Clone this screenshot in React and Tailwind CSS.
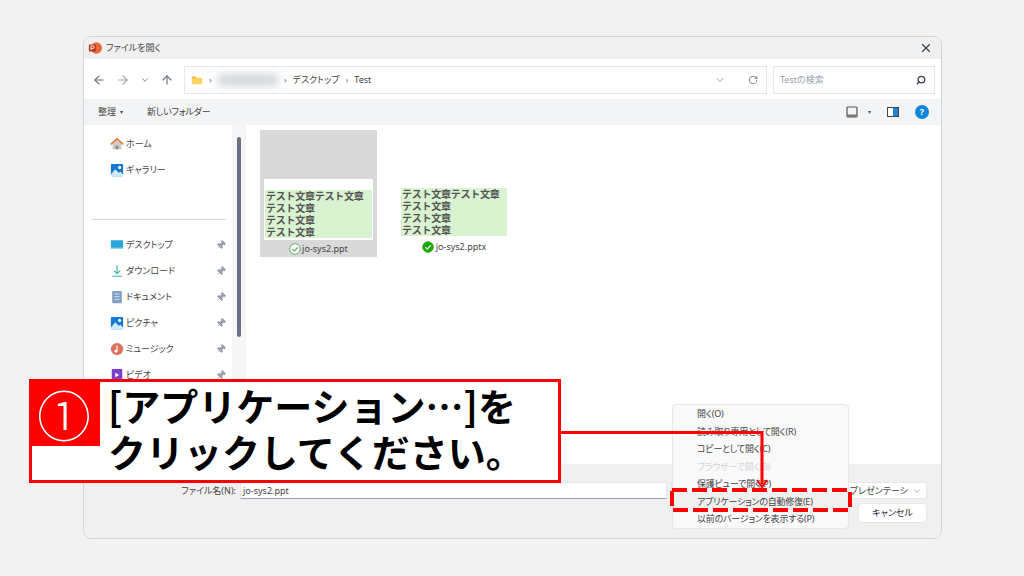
import { ArrowLeft, ArrowRight, ArrowUp, ChevronDown, Pin, RotateCw, Search, X } from "lucide-react";

const sidebarTop = [
  { label: "ホーム", icon: <HomeIcon /> },
  { label: "ギャラリー", icon: <PictureIcon /> },
];

const sidebarPinned = [
  { label: "デスクトップ", icon: <DesktopIcon /> },
  { label: "ダウンロード", icon: <DownloadIcon /> },
  { label: "ドキュメント", icon: <DocumentIcon /> },
  { label: "ピクチャ", icon: <PictureIcon /> },
  { label: "ミュージック", icon: <MusicIcon /> },
  { label: "ビデオ", icon: <VideoIcon /> },
];

const menuItems = [
  { label: "開く(O)" },
  { label: "読み取り専用として開く(R)" },
  { label: "コピーとして開く(C)" },
  { label: "ブラウザーで開く(B)", disabled: true },
  { label: "保護ビューで開く(P)" },
  { label: "アプリケーションの自動修復(E)", active: true },
  { label: "以前のバージョンを表示する(P)" },
];

function HomeIcon() {
  return (
    <svg viewBox="0 0 16 16" className="w-3.5 h-3.5">
      <path d="M3 8v6h10V8L8 3z" fill="#c9c9c9" />
      <path d="M6.5 14v-4h3v4z" fill="#8a8a8a" />
      <path d="M1 8.5 8 2l7 6.500" fill="none" stroke="#e2762b" strokeWidth="1.800" />
    </svg>
  );
}

function PictureIcon() {
  return (
    <svg viewBox="0 0 16 16" className="w-3.5 h-3.5">
      <rect x="1" y="1" width="14" height="14" rx="1" fill="#1478d4" />
      <circle cx="11" cy="5" r="1.800" fill="#fff" />
      <path d="M1 13 6 7l4 4 2-1 3 3v2H1z" fill="#cfe8fb" />
    </svg>
  );
}

function DesktopIcon() {
  return (
    <svg viewBox="0 0 16 16" className="w-3.5 h-3.5">
      <rect x="1" y="2.500" width="14" height="10" rx="0.500" fill="#2aa6d8" />
      <rect x="1" y="11" width="14" height="1.500" fill="#9fd8ee" />
    </svg>
  );
}

function DownloadIcon() {
  return (
    <svg viewBox="0 0 16 16" className="w-3.5 h-3.5" fill="none" stroke="#3fb5a3" strokeWidth="1.300">
      <path d="M8 1.500v9M4.500 7.500 8 11l3.500-3.500M2.500 14h11" />
    </svg>
  );
}

function DocumentIcon() {
  return (
    <svg viewBox="0 0 16 16" className="w-3.5 h-3.5">
      <rect x="2.500" y="1" width="11" height="14" rx="1" fill="#7f9fc4" />
      <path d="M5 4.500h6M5 7.500h6M5 10.500h6" stroke="#dbe6f2" strokeWidth="1" />
    </svg>
  );
}

function MusicIcon() {
  return (
    <svg viewBox="0 0 16 16" className="w-3.5 h-3.5">
      <circle cx="8" cy="8" r="7" fill="#e0705c" />
      <path d="M8 4v6" stroke="#fff" strokeWidth="1.300" />
      <circle cx="6.800" cy="10.500" r="1.700" fill="#fff" />
    </svg>
  );
}

function VideoIcon() {
  return (
    <svg viewBox="0 0 16 16" className="w-3.5 h-3.5">
      <rect x="2" y="1" width="12" height="14" rx="1" fill="#7c3fd1" />
      <path d="M6 5.500v5l4.500-2.500z" fill="#fff" />
    </svg>
  );
}

function PowerPointIcon() {
  return (
    <svg viewBox="0 0 16 16" className="w-3.5 h-3.5">
      <circle cx="9.500" cy="8" r="6.500" fill="#e8663c" />
      <rect x="1" y="4" width="8" height="8" rx="1" fill="#b83c1e" />
      <path d="M3.500 10.500v-5h2a1.500 1.500 0 0 1 0 3h-2" fill="none" stroke="#fff" strokeWidth="1" />
    </svg>
  );
}

function SyncCheck({ filled }) {
  return (
    <svg viewBox="0 0 12 12" className="w-3 h-3 shrink-0">
      <circle cx="6" cy="6" r="5.300" fill={filled ? "#22a80f" : "#fff"} stroke={filled ? "#22a80f" : "#4fa65a"} strokeWidth="0.900" />
      <path d="M3.300 6.200 5.300 8l3.400-3.700" fill="none" stroke={filled ? "#fff" : "#4fa65a"} strokeWidth="1.100" />
    </svg>
  );
}

function SlideText() {
  return (
    <div className="bg-[#d9f2d0] h-12 w-full pl-px text-[10px] leading-3 font-bold text-[#555] tracking-tight [font-feature-settings:normal]">
      <p>テスト文章テスト文章</p>
      <p>テスト文章</p>
      <p>テスト文章</p>
      <p>テスト文章</p>
    </div>
  );
}

function SidebarRow({ item, pinned }) {
  return (
    <div className="flex items-center h-6.5 pl-6.5 pr-1.5 gap-0.5">
      {item.icon}
      <span className="flex-1">{item.label}</span>
      {pinned && <Pin className="w-2.5 h-2.5 text-gray-400 fill-gray-400 rotate-45" />}
    </div>
  );
}

function FileDialog() {
  return (
    <div className="w-[859px] h-[503px] flex flex-col bg-white border border-gray-300 rounded-lg overflow-hidden text-[9px] text-[#444] [font-feature-settings:'palt']">
      {/* Title bar */}
      <div className="h-5.5 shrink-0 flex items-center pl-1 pr-2 gap-1 bg-[#f0f0f0]">
        <PowerPointIcon />
        <span>ファイルを開く</span>
        <X className="w-3.5 h-3.5 ml-auto text-gray-700" />
      </div>

      {/* Address row */}
      <div className="h-10 shrink-0 flex items-center pt-0.5 pl-2 pr-1.5 gap-1.5">
        <div className="flex items-center gap-2.5 w-21.5 text-gray-500 shrink-0">
          <ArrowLeft className="w-3.5 h-3.5" />
          <ArrowRight className="w-3.5 h-3.5 text-gray-400" />
          <ChevronDown className="w-2.5 h-2.5" />
          <ArrowUp className="w-3.5 h-3.5" />
        </div>
        <div className="flex-1 h-7 flex items-center pl-1.5 pr-2 gap-1.5 border border-gray-200">
          <svg viewBox="0 0 16 14" className="w-3 h-3">
            <path d="M1 2.500h5l1.500 1.500H15v8.500H1z" fill="#fcd462" />
            <path d="M1 2.500h5l1.500 1.500H1z" fill="#e8a92e" />
          </svg>
          <span className="text-gray-500">›</span>
          <div className="w-15 h-3 bg-gray-300 blur-xs" />
          <span className="text-gray-500">›</span>
          <span>デスクトップ</span>
          <span className="text-gray-500">›</span>
          <span>Test</span>
          <ChevronDown className="w-3 h-3 ml-auto text-gray-400" />
          <RotateCw className="w-2.5 h-2.5 ml-4 text-gray-500" />
        </div>
        <div className="w-[162px] h-7 flex items-center justify-between pl-1.5 pr-2 border border-gray-200 text-gray-400">
          <span>Testの検索</span>
          <Search className="w-2.5 h-2.5 text-gray-700 -scale-x-100" strokeWidth={3} />
        </div>
      </div>

      {/* Toolbar */}
      <div className="h-6.5 shrink-0 flex items-center pl-3.5 pr-3 bg-[#f3f4f6]">
        <span>整理</span>
        <span className="ml-1 text-[6px]">▾</span>
        <span className="ml-6 tracking-tight">新しいフォルダー</span>
        <div className="ml-auto flex items-center gap-2.5">
          <svg viewBox="0 0 12 12" className="w-3 h-3">
            <rect x="1" y="1" width="10" height="10" rx="1" fill="none" stroke="#555" strokeWidth="1.200" />
            <rect x="1" y="8.500" width="10" height="2.500" fill="#777" />
          </svg>
          <span className="text-[6px] text-gray-600">▾</span>
          <svg viewBox="0 0 12 12" className="w-3 h-3 ml-1.5">
            <rect x="0.500" y="1.500" width="11" height="9" fill="#fff" stroke="#444" />
            <rect x="6" y="2" width="5" height="8" fill="#1a86d8" />
          </svg>
          <div className="ml-1.5 w-3.5 h-3.5 rounded-full bg-[#0f86dc] text-white flex items-center justify-center font-bold">?</div>
        </div>
      </div>

      {/* Navigation pane and files */}
      <div className="flex-1 min-h-0 flex">
        <div className="w-37 shrink-0 pt-1.5">
          {sidebarTop.map((item) => (
            <SidebarRow key={item.label} item={item} />
          ))}
          <div className="mt-9 mb-3 ml-2 mr-1.5 border-t border-gray-300" />
          {sidebarPinned.map((item) => (
            <SidebarRow key={item.label} item={item} pinned />
          ))}
        </div>
        <div className="w-3.5 shrink-0 bg-[#f6f6f6] pt-3 flex justify-center">
          <div className="w-1 h-50 rounded-full bg-gray-500" />
        </div>
        <div className="flex-1 flex items-start gap-6 pl-3.5 pt-[5px]">
          <div className="w-[117px] h-[127px] flex flex-col items-center justify-end bg-[#d9d9d9]">
            <div className="w-[109px] h-[61px] flex flex-col justify-end pb-0.5 px-px bg-white">
              <SlideText />
            </div>
            <div className="h-[17px] flex items-center gap-px">
              <SyncCheck />
              <span>jo-sys2.ppt</span>
            </div>
          </div>
          <div className="w-[106px] pt-[58px] flex flex-col items-center">
            <SlideText />
            <div className="h-[22px] flex items-center gap-0.5">
              <SyncCheck filled />
              <span>jo-sys2.pptx</span>
            </div>
          </div>
        </div>
      </div>

      {/* File name row and buttons */}
      <div className="h-[74px] shrink-0 bg-[#f0f0f0] pt-[18px] pr-3.5 flex flex-col gap-1">
        <div className="flex items-center h-[17px]">
          <span className="w-[152px] text-right">ファイル名(N):</span>
          <div className="flex-1 h-full flex items-center ml-1 pl-0.5 bg-white border border-gray-200 border-b-gray-400">
            jo-sys2.ppt
          </div>
          <div className="w-64 h-full ml-1 flex items-center justify-end gap-1 pr-1 bg-white border border-gray-200 whitespace-nowrap">
            <span>Microsoft PowerPoint プレゼンテーシ</span>
            <ChevronDown className="w-2.5 h-2.5 text-gray-400" />
          </div>
        </div>
        <div className="flex justify-end gap-2">
          <div className="w-[69px] h-5 flex items-center justify-center bg-white border border-gray-200 rounded-sm text-gray-800">
            キャンセル
          </div>
        </div>
      </div>
    </div>
  );
}

function OpenMenu() {
  return (
    <div className="absolute left-[672px] top-[404px] w-[177px] bg-[#f9f9f9] border border-gray-200 rounded-sm text-[9px] text-[#444] tracking-tight [font-feature-settings:'palt']">
      {menuItems.map((item) => (
        <div
          key={item.label}
          className={`h-[17.500px] flex items-center pl-6 ${item.disabled ? "text-gray-300" : ""} ${item.active ? "bg-[#f0f0f0]" : ""}`}
        >
          {item.label}
        </div>
      ))}
    </div>
  );
}

function Callout() {
  return (
    <div className="absolute left-[29px] top-[379px] w-[532px] h-[104px] flex bg-white/95 border-3 border-[#ff0000] font-['Noto_Sans_CJK_JP',sans-serif]">
      <div className="w-[68px] h-[64px] shrink-0 flex items-center justify-center pr-1 bg-[#ff0000] text-white text-[54px] leading-none font-light">①</div>
      <div className="pl-2 text-[38px] leading-[46px] font-semibold text-black whitespace-nowrap">
        <p>[アプリケーション…]を</p>
        <p>クリックしてください。</p>
      </div>
    </div>
  );
}

function Annotations() {
  return (
    <svg className="absolute inset-0 w-full h-full pointer-events-none" viewBox="0 0 1024 576">
      <path d="M561 432.500H762V484" fill="none" stroke="#ff0000" strokeWidth="3" />
      <path d="M757 480l5 7 5-7" fill="none" stroke="#ff0000" strokeWidth="2" />
      <rect x="672" y="490" width="178" height="20" fill="none" stroke="#ff0000" strokeWidth="4" strokeDasharray="15 5" />
    </svg>
  );
}

export default function App() {
  return (
    <div className="relative w-full h-screen overflow-hidden bg-[#f2f2f2] pt-9 pl-[83px] font-['Noto_Sans','Noto_Sans_CJK_JP',sans-serif]">
      <FileDialog />
      <OpenMenu />
      <Annotations />
      <Callout />
    </div>
  );
}
